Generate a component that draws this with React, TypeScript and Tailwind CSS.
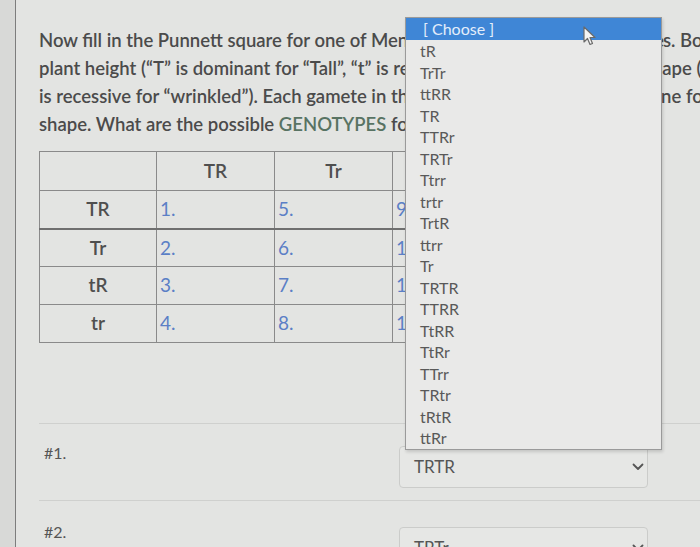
import React from "react";

const items = [
  "tR","TrTr","ttRR","TR","TTRr","TRTr","Ttrr","trtr","TrtR","ttrr","Tr",
  "TRTR","TTRR","TtRR","TtRr","TTrr","TRtr","tRtR","ttRr",
];

const rows = [
  { label: "TR", nums: ["1.", "5.", "9.", "13."] },
  { label: "Tr", nums: ["2.", "6.", "10.", "14."] },
  { label: "tR", nums: ["3.", "7.", "11.", "15."] },
  { label: "tr", nums: ["4.", "8.", "12.", "16."] },
];

function Chevron() {
  return (
    <svg width="12" height="8" viewBox="0 0 12 8" fill="none">
      <path d="M1.5 1.5 L6 6 L10.5 1.5" stroke="#555" strokeWidth="1.8" strokeLinecap="round" strokeLinejoin="round" />
    </svg>
  );
}

export default function App() {
  return (
    <div className="relative w-[700px] h-[547px] overflow-hidden bg-[#e3e4e2] font-['Lato','Noto_Sans',sans-serif]">
      <div className="flex h-full">
        <div className="w-[16px] shrink-0 bg-[#d8d9d7] border-r border-[#7d7d7d]" />
        <div className="pl-[23px] pt-[26px] shrink-0 w-[1000px]">
          <div className="text-[18.5px] leading-[28px] font-semibold text-[#4b4b4b] whitespace-nowrap">
            <div>Now fill in the Punnett square for one of Mendel&apos;s classic pea dihybrid cross<span className="tracking-[-1px]">e</span>s. Both</div>
            <div>plant height (&ldquo;T&rdquo; is dominant for &ldquo;Tall&rdquo;, &ldquo;t&rdquo; is recessive for &ldquo;short&rdquo;) and seed shape (&ldquo;R&rdquo;</div>
            <div>is recessive for &ldquo;wrinkled&rdquo;). Each gamete in this dihybrid{"\u00a0\u00a0"} cross will contain one for</div>
            <div>
              shape. What are the possible <span className="text-[#587363]">GENOTYPES</span> for the offspring?
            </div>
          </div>

          <table className="mt-[13px] border-collapse table-fixed border border-[#7c7c7c] text-[19px]">
            <colgroup>
              <col className="w-[117px]" />
              <col className="w-[118px]" />
              <col className="w-[118px]" />
              <col className="w-[118px]" />
              <col className="w-[118px]" />
            </colgroup>
            <thead>
              <tr className="h-[39px]">
                <th className="border border-[#8a8a8a]" />
                <th className="border border-[#8a8a8a] font-semibold text-[#4f4f4f] text-center">TR</th>
                <th className="border border-[#8a8a8a] font-semibold text-[#4f4f4f] text-center">Tr</th>
                <th className="border border-[#8a8a8a] font-semibold text-[#4f4f4f] text-center">tR</th>
                <th className="border border-[#8a8a8a] font-semibold text-[#4f4f4f] text-center">tr</th>
              </tr>
            </thead>
            <tbody>
              {rows.map((r, i) => (
                <tr key={r.label} className={i === 0 ? "h-[38px] border-b-2 border-[#6f6f6f]" : "h-[38px]"}>
                  <td className="border border-[#8a8a8a] text-center font-semibold text-[#4f4f4f]">{r.label}</td>
                  {r.nums.map((n) => (
                    <td key={n} className="border border-[#8a8a8a] pl-[3px] text-[#5b7fc6]">{n}</td>
                  ))}
                </tr>
              ))}
            </tbody>
          </table>

          <div className="mt-[80px] w-[700px]">
            <div className="flex h-[77px] border-t border-[#cfd0ce]">
              <div className="w-[360px] pl-[5px] pt-[19px] text-[16px] leading-[20px] text-[#555]">#1.</div>
              <div className="mt-[22px] w-[249px] h-[42px] rounded-[4px] border border-[#cbccca] bg-[#e6e7e5] flex items-center justify-between pl-[14px] pr-[3px] text-[17px] text-[#555]">
                <span>TRTR</span>
                <Chevron />
              </div>
            </div>
            <div className="flex h-[77px] border-t border-[#cfd0ce]">
              <div className="w-[360px] pl-[5px] pt-[21px] text-[16px] leading-[20px] text-[#555]">#2.</div>
              <div className="mt-[26px] w-[249px] h-[42px] rounded-[4px] border border-[#cbccca] bg-[#e6e7e5] flex items-center justify-between pl-[14px] pr-[3px] text-[17px] text-[#555]">
                <span>TRTr</span>
                <Chevron />
              </div>
            </div>
          </div>
        </div>
      </div>

      {/* open dropdown list */}
      <div className="absolute left-[405px] top-[17px] w-[257px] bg-[#e9e9e8] border border-[#9a9a9a] shadow-[1px_2px_3px_rgba(0,0,0,0.15)] text-[16px] leading-[21.5px]">
        <div className="bg-[#3f86d6] text-[#e4eefb] pl-[17px] h-[22px] leading-[22px]">[ Choose ]</div>
        {items.map((it, i) => (
          <div key={i} className="pl-[14px] h-[21.5px] text-[#595959]">{it}</div>
        ))}
      </div>

      {/* mouse cursor */}
      <svg className="absolute left-[583px] top-[26px]" width="14" height="20" viewBox="0 0 14 20">
        <path d="M1 1 L1 16 L4.5 12.5 L7 18.5 L9.5 17.5 L7 11.5 L12 11.5 Z" fill="#f4f4f4" stroke="#6b6b6b" strokeWidth="1.2" strokeLinejoin="round" />
      </svg>
    </div>
  );
}
